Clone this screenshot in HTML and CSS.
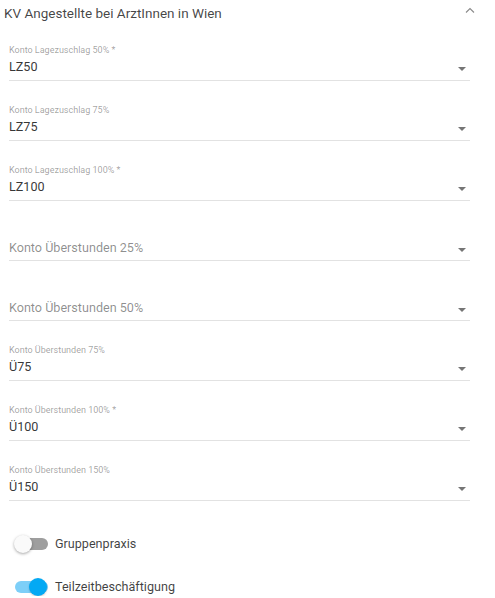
FILE: index.html
```html
<!DOCTYPE html>
<html lang="de">
<head>
  <meta charset="UTF-8" />
  <meta name="viewport" content="width=device-width, initial-scale=1.0" />
  <title>KV Angestellte bei ArztInnen in Wien</title>
  <link rel="stylesheet" href="styles.css">
</head>
<body>
  <!-- Panel Header -->
  <div class="panel-header">
    <span class="panel-title">KV Angestellte bei ArztInnen in Wien</span>
    <svg class="chevron" width="10" height="6" viewBox="0 0 10 6">
      <path d="M1 5.5 L5 1.5 L9 5.5" fill="none" stroke="#8a8a8a" stroke-width="1.1" />
    </svg>
  </div>

  <!-- Select Fields -->
  <div class="fields">
    <div class="field">
      <label class="field-label">Konto Lagezuschlag 50% *</label>
      <div class="field-row">
        <span class="field-value">LZ50</span>
        <span class="arrow"></span>
      </div>
    </div>
    <div class="field">
      <label class="field-label">Konto Lagezuschlag 75%</label>
      <div class="field-row">
        <span class="field-value">LZ75</span>
        <span class="arrow"></span>
      </div>
    </div>
    <div class="field">
      <label class="field-label">Konto Lagezuschlag 100% *</label>
      <div class="field-row">
        <span class="field-value">LZ100</span>
        <span class="arrow"></span>
      </div>
    </div>
    <div class="field empty">
      <div class="field-row">
        <span class="field-value placeholder">Konto Überstunden 25%</span>
        <span class="arrow"></span>
      </div>
    </div>
    <div class="field empty">
      <div class="field-row">
        <span class="field-value placeholder">Konto Überstunden 50%</span>
        <span class="arrow"></span>
      </div>
    </div>
    <div class="field">
      <label class="field-label">Konto Überstunden 75%</label>
      <div class="field-row">
        <span class="field-value">Ü75</span>
        <span class="arrow"></span>
      </div>
    </div>
    <div class="field">
      <label class="field-label">Konto Überstunden 100% *</label>
      <div class="field-row">
        <span class="field-value">Ü100</span>
        <span class="arrow"></span>
      </div>
    </div>
    <div class="field">
      <label class="field-label">Konto Überstunden 150%</label>
      <div class="field-row">
        <span class="field-value">Ü150</span>
        <span class="arrow"></span>
      </div>
    </div>
  </div>

  <!-- Toggles -->
  <div class="toggles">
    <div class="toggle">
      <span class="switch">
        <span class="track"></span>
        <span class="thumb"></span>
      </span>
      <span class="toggle-label">Gruppenpraxis</span>
    </div>
    <div class="toggle on">
      <span class="switch">
        <span class="track"></span>
        <span class="thumb"></span>
      </span>
      <span class="toggle-label">Teilzeitbeschäftigung</span>
    </div>
  </div>
</body>
</html>
```

FILE: styles.css
```css
body {
  margin: 0;
  background-color: #ffffff;
  color: rgba(0, 0, 0, 0.8);
  font-family: Roboto, "Noto Sans", Arial, sans-serif;
}
.panel-header {
  height: 16px;
  padding: 5px 20px 0 4px;
  display: flex;
  align-items: center;
  justify-content: space-between;
}
.panel-title {
  font-size: 13.5px;
  color: rgba(0, 0, 0, 0.74);
}
.chevron {
  margin-top: -6px;
}
.fields {
  padding: 0 25px 0 9px;
}
.field {
  height: 54px;
  margin-top: 5px;
  border-bottom: 1px solid #e2e2e2;
  display: flex;
  flex-direction: column;
  justify-content: flex-end;
}
.field-label {
  font-size: 9px;
  line-height: 12px;
  margin-bottom: 2px;
  color: rgba(0, 0, 0, 0.38);
}
.field-row {
  display: flex;
  align-items: center;
  padding-bottom: 4px;
}
.field.empty .field-row {
  padding-bottom: 3px;
}
.field-value {
  flex: 1;
  font-size: 12.6px;
  line-height: 18px;
}
.placeholder {
  color: rgba(0, 0, 0, 0.45);
}
.arrow {
  width: 0;
  height: 0;
  margin: 3px 4px 0 0;
  border-left: 4.5px solid transparent;
  border-right: 4.5px solid transparent;
  border-top: 4.5px solid rgba(0, 0, 0, 0.54);
}
.toggles {
  padding: 33px 0 0 14px;
  display: flex;
  flex-direction: column;
  gap: 24px;
}
.toggle {
  display: flex;
  align-items: center;
  gap: 7px;
  height: 19px;
}
.switch {
  position: relative;
  width: 34px;
  height: 19px;
}
.track {
  position: absolute;
  left: 1px;
  right: 0;
  top: 3.5px;
  height: 12px;
  border-radius: 6px;
  background-color: #9e9e9e;
}
.thumb {
  position: absolute;
  left: 0;
  top: 0.5px;
  width: 18px;
  height: 18px;
  border-radius: 50%;
  background-color: #fafafa;
  box-shadow: 0 1px 3px rgba(0, 0, 0, 0.35);
}
.toggle.on .track {
  background-color: #7dcff8;
}
.toggle.on .thumb {
  left: 15px;
  background-color: #03a9f4;
  box-shadow: 0 1px 2px rgba(0, 0, 0, 0.2);
}
.toggle-label {
  font-size: 12.6px;
  color: rgba(0, 0, 0, 0.75);
}
```
